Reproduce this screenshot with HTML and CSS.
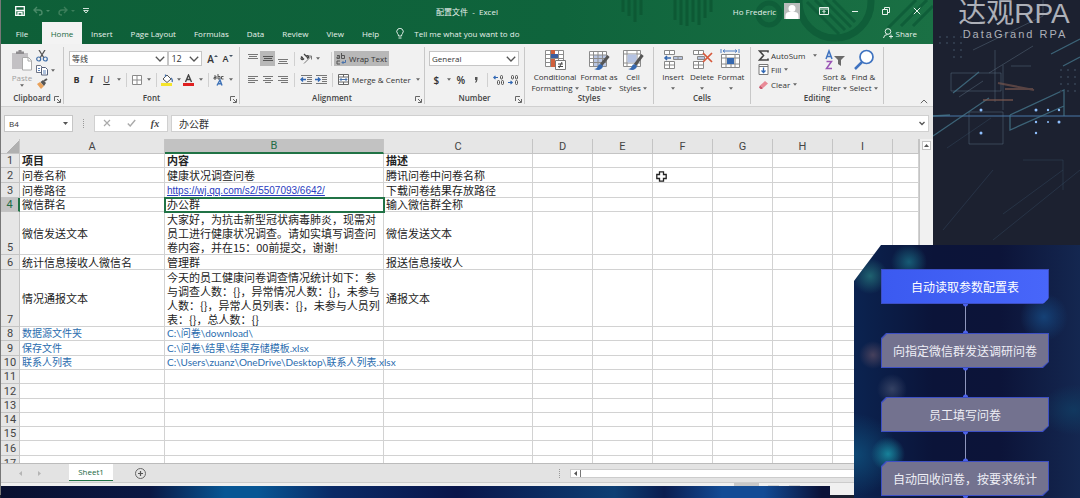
FILE: index.html
```html
<!DOCTYPE html>
<html lang="zh-CN">
<head>
<meta charset="utf-8">
<title>配置文件 - Excel</title>
<link rel="stylesheet" href="styles.css">
</head>
<body>
<svg class="defs" aria-hidden="true">
  <symbol id="caret" viewBox="0 0 5 3"><path d="M0 0h5L2.500 3z" fill="#666"/></symbol>
  <symbol id="chev" viewBox="0 0 10 6"><path d="M.8.8 5 5 9.200.8" fill="none" stroke="#555" stroke-width="1.300"/></symbol>
  <symbol id="launch" viewBox="0 0 7 7"><path d="M.5 5V.5H5M3 3l3 3M6.500 3v3.500H3" fill="none" stroke="#666"/></symbol>
</svg>
<div class="stage">
<main class="app">
  <header class="top">
    <svg class="deco" viewBox="0 0 320 44" aria-hidden="true">
      <g stroke="#0d5934" stroke-width="3"><path d="M10 0v12M16 0v16M22 0v22M28 0v15M62 0v20M68 0v25M74 0v26M80 0v22M86 0v25M92 0v18M98 0v12"/></g>
      <g fill="none" stroke="#0f5e39"><circle cx="156" cy="14" r="11" stroke-width="5"/><circle cx="222" cy="2" r="36" stroke-width="7"/><path stroke-width="3" d="M194 2l32 32M202 0l30 30M211 0l27 27M220 0l22 22M275 28 303 0M288 26 314 0M300 26l20-20"/></g>
    </svg>
    <div class="titlebar">
      <div class="quick">
        <button aria-label="Save"><svg width="10" height="10" viewBox="0 0 10 10"><path d="M.7.700h8.600v8.600H.7z" fill="none" stroke="#fff" stroke-width="1.300"/><path d="M1 4.500h8M3 9V6.500h4V9" fill="none" stroke="#fff" stroke-width="1.300"/></svg></button>
        <button aria-label="Undo"><svg width="17" height="10" viewBox="0 0 17 10"><path d="M4 1 1 4l3 3M1 4h5q3 0 3 3 0 2-3 2" fill="none" stroke="#4a8a68" stroke-width="1.400"/><path d="M13 4h4l-2 2z" fill="#4a8a68"/></svg></button>
        <button aria-label="Redo"><svg width="17" height="10" viewBox="0 0 17 10"><path d="M6 1l3 3-3 3M9 4H4Q1 4 1 7q0 2 3 2" fill="none" stroke="#3c7f5b" stroke-width="1.400"/><path d="M13 4h4l-2 2z" fill="#3c7f5b"/></svg></button>
        <button aria-label="Customize"><svg width="6" height="6" viewBox="0 0 6 6"><path d="M0 .5h6M.7 2.500h4.600L3 5z" fill="none" stroke="#cfe2d8"/></svg></button>
      </div>
      <div class="doc">配置文件&nbsp; - &nbsp;Excel</div>
      <div class="user"><span>Ho Frederic</span>
        <svg width="16" height="16" viewBox="0 0 16 16"><path d="M0 0h16v16H0z" fill="#b9bcbb"/><circle cx="8" cy="5.500" r="3.500" fill="#fff"/><path d="M1.500 16v-3q0-4 4-4h5q4 0 4 4v3z" fill="#fff"/></svg></div>
      <div class="winbtns">
        <button aria-label="Ribbon options"><svg width="10" height="8" viewBox="0 0 10 8"><path d="M.5.500h9v7h-9zM.5 2h9M5 6.500v-3M3.500 5 5 3.500 6.500 5" fill="none" stroke="#e8f2ec"/></svg></button>
        <button aria-label="Minimize"><svg width="8" height="8" viewBox="0 0 8 8"><path d="M1 4.500h6" stroke="#e8f2ec"/></svg></button>
        <button aria-label="Restore"><svg width="8" height="8" viewBox="0 0 8 8"><path d="M.5 2.500h5v5h-5zM2.500 2V.5h5v5H6" fill="none" stroke="#e8f2ec"/></svg></button>
        <button aria-label="Close"><svg width="8" height="8" viewBox="0 0 8 8"><path d="M.8.800l6.400 6.400M7.200.800.8 7.200" stroke="#e8f2ec"/></svg></button>
      </div>
    </div>
    <nav class="tabs">
      <button>File</button><button class="on">Home</button><button>Insert</button><button>Page Layout</button><button>Formulas</button><button>Data</button><button>Review</button><button>View</button><button>Help</button>
      <button class="tell"><svg width="8" height="11" viewBox="0 0 8 11"><path d="M2.500 8Q2.500 6.500 1.500 5.500A3.200 3.200 0 1 1 6.500 5.500Q5.500 6.500 5.500 8zM2.500 10h3" fill="none" stroke="#e3efe8"/></svg>Tell me what you want to do</button>
      <button class="share"><svg width="10" height="11" viewBox="0 0 10 11"><circle cx="5" cy="3.500" r="2.800" fill="none" stroke="#e3efe8"/><path d="M.5 10Q1 6.500 4.500 6.500M8 6.500v4M6 8.500h4" fill="none" stroke="#e3efe8"/></svg>Share</button>
    </nav>
  </header>

  <section class="ribbon">
    <div class="group g-clip">
      <div class="body">
        <button class="big off"><svg width="22" height="22" viewBox="0 0 22 22"><path d="M1 4h16v16H1z" fill="#c3c1c4"/><path d="M5 4V2.500h2.500V1h3v1.500H13V5H5z" fill="#8e8c8f"/><path d="M11.500 8.500h6l3 3v9.500h-9z" fill="#fff" stroke="#aaa"/><path d="M17 8.500v3.500h3.500" fill="none" stroke="#aaa"/></svg>Paste<svg class="caret"><use href="#caret"/></svg></button>
        <div class="stack">
          <button aria-label="Cut"><svg width="12" height="12" viewBox="0 0 12 12"><path d="M3 0l5 8M9 0 4 8" stroke="#555" stroke-width="1.300"/><circle cx="2.700" cy="9" r="2" fill="none" stroke="#3f6ea8" stroke-width="1.200"/><circle cx="9.300" cy="9" r="2" fill="none" stroke="#3f6ea8" stroke-width="1.200"/></svg></button>
          <button aria-label="Copy"><svg width="12" height="12" viewBox="0 0 12 12"><path d="M.5 1.500h4l2 2v5h-6z" fill="#fff" stroke="#6e7485"/><path d="M5.500 3.500h4l2 2v5.500h-6z" fill="#fff" stroke="#55607a"/><path d="M2 4.500h2M2 6.500h2M7 7h3M7 9h3" stroke="#5c83bb"/></svg><svg class="caret"><use href="#caret"/></svg></button>
          <button aria-label="Format Painter"><svg width="12" height="12" viewBox="0 0 12 12"><path d="M1 6l3-2 4 4-3 3z" fill="#e9a25b"/><path d="M4.500 4 7 2l3 3-2 3z" fill="#555"/><path d="M8 3l3-2" stroke="#555" stroke-width="2"/></svg></button>
        </div>
      </div>
      <h2>Clipboard</h2><svg class="launch"><use href="#launch"/></svg>
    </div>

    <div class="group g-font">
      <div class="body rows">
        <div class="row">
          <label class="combo c-name"><select aria-label="Font name"><option>等线</option></select><svg><use href="#chev"/></svg></label>
          <label class="combo c-size"><select aria-label="Font size"><option>12</option></select><svg><use href="#chev"/></svg></label>
          <button class="ic" aria-label="Grow font"><span class="glyph">A</span><svg width="4" height="8" viewBox="0 0 4 8"><path d="M0 2h4L2 0z" fill="#456"/></svg></button>
          <button class="ic" aria-label="Shrink font"><span class="glyph sm">A</span><svg width="4" height="8" viewBox="0 0 4 8"><path d="M0 0h4L2 2z" fill="#456"/></svg></button>
        </div>
        <div class="row">
          <button class="ic"><b>B</b></button><button class="ic it"><i>I</i></button><button class="ic"><u>U</u></button><svg class="caret"><use href="#caret"/></svg>
          <hr>
          <button class="ic" aria-label="Borders"><svg width="10" height="10" viewBox="0 0 10 10"><path d="M.5.500h9v9h-9zM5 1v8M1 5h8" fill="#fff" stroke="#8a8a8a"/></svg></button><svg class="caret"><use href="#caret"/></svg>
          <hr>
          <button class="ic" aria-label="Fill color"><svg width="12" height="12" viewBox="0 0 12 12"><path d="M0 9h11v3H0z" fill="#f5e42b"/><path d="M2 5l4-4 4 4-4 3.500z" fill="#fff" stroke="#555"/><path d="M4.500 3V.5M10 4q2 2 1 4" stroke="#4872ab" fill="none" stroke-width="1.300"/></svg></button><svg class="caret"><use href="#caret"/></svg>
          <button class="ic" aria-label="Font color"><svg width="12" height="12" viewBox="0 0 12 12"><path d="M0 9h11v3H0z" fill="#e02020"/><path d="M2.500 8 5.500 1l3 7M3.700 5.500h3.600" fill="none" stroke="#444" stroke-width="1.400"/></svg></button><svg class="caret"><use href="#caret"/></svg>
          <hr>
          <button class="ic" aria-label="Phonetic"><svg width="11" height="12" viewBox="0 0 11 12"><path d="M1 2h2v3H1V3.500h2M5 0v5h2V2.500H5M10.500 2.500h-2V5h2" fill="none" stroke="#555"/><path d="M4 11.500 7 6l2 5.500M5 9.800h4" fill="none" stroke="#3f73b8" stroke-width="1.400"/></svg></button><svg class="caret"><use href="#caret"/></svg>
        </div>
      </div>
      <h2>Font</h2><svg class="launch"><use href="#launch"/></svg>
    </div>

    <div class="group g-align">
      <div class="body rows">
        <div class="row">
          <button class="ic" aria-label="Top align"><svg width="10" height="12" viewBox="0 0 10 12"><path d="M0 1.500h10M1 3.500h8M0 5.500h10" stroke="#777"/></svg></button>
          <button class="ic on" aria-label="Middle align"><svg width="10" height="12" viewBox="0 0 10 12"><path d="M0 3.500h10M1 5.500h8M0 7.500h10" stroke="#555"/></svg></button>
          <button class="ic" aria-label="Bottom align"><svg width="10" height="12" viewBox="0 0 10 12"><path d="M0 6.500h10M1 8.500h8M0 10.500h10" stroke="#777"/></svg></button>
          <hr>
          <button class="ic" aria-label="Orientation"><svg width="12" height="11" viewBox="0 0 12 11"><path d="M4 10.500 11 3.500M8 3h3.500v3.500" fill="none" stroke="#777"/><path d="M1 3.500l3 3M1 6q0-2 2-1.500M1 6q1.500 1.500 3-.5M4 1l4 4M6 3q2-1 2.500.5T7 5.500" fill="none" stroke="#444" stroke-width="1.200"/></svg></button><svg class="caret"><use href="#caret"/></svg>
          <hr class="wide-gap">
          <button class="txt on"><svg width="10" height="12" viewBox="0 0 10 12"><path d="M1 2.500h2.500v3H1V4h2.500M5.500 0v5.500H8.500v-3H5.500M4 8H1v3h3" fill="none" stroke="#555"/><path d="M9.500 7v2.500H6M7.500 8 6 9.500 7.500 11" fill="none" stroke="#4872ab"/></svg>Wrap Text</button>
        </div>
        <div class="row">
          <button class="ic" aria-label="Align left"><svg width="10" height="9" viewBox="0 0 10 9"><path d="M0 1.500h10M0 3.500h7M0 5.500h10M0 7.500h7" stroke="#777"/></svg></button>
          <button class="ic" aria-label="Center"><svg width="10" height="9" viewBox="0 0 10 9"><path d="M0 1.500h10M2 3.500h6M0 5.500h10M2 7.500h6" stroke="#777"/></svg></button>
          <button class="ic" aria-label="Align right"><svg width="10" height="9" viewBox="0 0 10 9"><path d="M0 1.500h10M3 3.500h7M0 5.500h10M3 7.500h7" stroke="#777"/></svg></button>
          <hr>
          <button class="ic" aria-label="Decrease indent"><svg width="12" height="10" viewBox="0 0 12 10"><path d="M1 .5h11M7 2.500h5M7 4.500h5M7 6.500h5M1 8.500h11" stroke="#777"/><path d="M6 4.500H1M3 2.500l-2 2 2 2" fill="none" stroke="#2f66b3" stroke-width="1.400"/></svg></button>
          <button class="ic" aria-label="Increase indent"><svg width="12" height="10" viewBox="0 0 12 10"><path d="M1 .5h11M7 2.500h5M7 4.500h5M7 6.500h5M1 8.500h11" stroke="#777"/><path d="M0 4.500h5M3 2.500l2 2-2 2" fill="none" stroke="#2f66b3" stroke-width="1.400"/></svg></button>
          <hr>
          <button class="txt"><svg width="11" height="11" viewBox="0 0 11 11"><path d="M.5.500h10v10H.5zM.5 3h10M.5 8h10M5.500.500V3M5.500 8v2.500" fill="#fff" stroke="#666"/><path d="M2 5.500h7M3.500 4 2 5.500 3.500 7M7.500 4 9 5.500 7.500 7" fill="none" stroke="#4872ab"/></svg>Merge &amp; Center</button><svg class="caret"><use href="#caret"/></svg>
        </div>
      </div>
      <h2>Alignment</h2><svg class="launch"><use href="#launch"/></svg>
    </div>

    <div class="group g-num">
      <div class="body rows">
        <div class="row"><label class="combo c-fmt"><select aria-label="Number format"><option>General</option></select><svg><use href="#chev"/></svg></label></div>
        <div class="row">
          <button class="ic"><span class="glyph">$</span></button><svg class="caret"><use href="#caret"/></svg>
          <button class="ic pct"><span class="glyph">%</span></button>
          <button class="ic" aria-label="Comma style"><svg width="4" height="6" viewBox="0 0 4 6"><path d="M1 0h2.500v2.500Q3.500 5 1 6L2 3H1z" fill="#555"/></svg></button>
          <hr>
          <button class="ic" aria-label="Increase decimal"><svg width="11" height="10" viewBox="0 0 11 10"><path d="M5 2.500H1M2.500.800.8 2.500l1.700 1.700" fill="none" stroke="#2f66b3" stroke-width="1.200"/><g fill="none" stroke="#555"><rect x="7.500" y=".5" width="2" height="3.500" rx="1"/><rect x="4.500" y="5.500" width="2" height="4" rx="1"/><rect x="8.500" y="5.500" width="2" height="4" rx="1"/></g></svg></button>
          <button class="ic" aria-label="Decrease decimal"><svg width="11" height="10" viewBox="0 0 11 10"><path d="M1 7.500h4M3.500 5.800l1.700 1.700-1.700 1.700" fill="none" stroke="#2f66b3" stroke-width="1.200"/><g fill="none" stroke="#555"><rect x="4.500" y=".5" width="2" height="3.500" rx="1"/><rect x="8.500" y=".5" width="2" height="3.500" rx="1"/><rect x="8.500" y="5.500" width="2" height="4" rx="1"/></g></svg></button>
        </div>
      </div>
      <h2>Number</h2><svg class="launch"><use href="#launch"/></svg>
    </div>

    <div class="group g-style">
      <div class="body bigs">
        <button class="big w1"><svg width="22" height="22" viewBox="0 0 22 22"><path d="M1.500 1.500h18v16h-18zM1.500 5.500h18M1.500 9.500h18M1.500 13.500h18M6.500 1.500v16M14.500 1.500v16" fill="#fff" stroke="#8b8b8b"/><path d="M7 1h4v4H7zM7 10h4v8H7z" fill="#d0603c"/><path d="M7 5h7v4H7z" fill="#3c5fa0"/><path d="M11.500 11.500h10v9h-10z" fill="#fff" stroke="#777"/><path d="M14 15h5M14 17.500h5M18 13l-3 6" stroke="#444"/></svg><span>Conditional<br>Formatting <svg class="caret"><use href="#caret"/></svg></span></button>
        <button class="big w2"><svg width="22" height="22" viewBox="0 0 22 22"><path d="M1.500 2.500h17v15h-17z" fill="#fff" stroke="#8b8b8b"/><path d="M6 6h12v11H6z" fill="#b9c6e2"/><path d="M1.500 6h17M1.500 9.500h17M1.500 13.500h17M5.500 2.500v15M10 2.500v15M14.500 2.500v15" stroke="#8b8b8b"/><path d="M20.500 7 13 16" stroke="#555" stroke-width="3"/><path d="M6 20q3 0 4-3t4-1q2 2-1 4-2 2-7 0z" fill="#3568b0"/></svg><span>Format as<br>Table <svg class="caret"><use href="#caret"/></svg></span></button>
        <button class="big w3"><svg width="22" height="22" viewBox="0 0 22 22"><path d="M1.500 1.500h17v16h-17zM1.500 5h17M1.500 14h17M5 1.500v16M15 1.500v16" fill="#fff" stroke="#8b8b8b"/><path d="M5.500 5.500h9v8h-9z" fill="#b4c2e2"/><path d="M20.500 6 13 16" stroke="#555" stroke-width="3"/><path d="M6 20q3 0 4-3t4-1q2 2-1 4-2 2-7 0z" fill="#3568b0"/></svg><span>Cell<br>Styles <svg class="caret"><use href="#caret"/></svg></span></button>
      </div>
      <h2>Styles</h2>
    </div>

    <div class="group g-cells">
      <div class="body bigs">
        <button class="big w4"><svg width="22" height="22" viewBox="0 0 22 22"><path d="M2.500 1.500h10v4h-10zM7.500 1.500v4M2.500 12.500h10v7h-10zM7.500 12.500v7M2.500 16h10" fill="#fff" stroke="#888"/><path d="M11.500 7.500h9v3h-9zM16 7.500v3" fill="#b7c3dc" stroke="#888"/><path d="M9 9H3M5 7 3 9l2 2" fill="none" stroke="#3568b0" stroke-width="1.500"/></svg><span>Insert<br><svg class="caret"><use href="#caret"/></svg></span></button>
        <button class="big w4"><svg width="22" height="22" viewBox="0 0 22 22"><path d="M2.500 1.500h10v4h-10zM7.500 1.500v4M2.500 12.500h10v7h-10zM7.500 12.500v7M2.500 16h10" fill="#fff" stroke="#888"/><path d="M6.500 7.500h7v3h-7z" fill="#b7c3dc" stroke="#888"/><path d="M12 4l9 9M21 4l-9 9" stroke="#d6573a" stroke-width="1.700"/></svg><span>Delete<br><svg class="caret"><use href="#caret"/></svg></span></button>
        <button class="big w4"><svg width="22" height="22" viewBox="0 0 22 22"><path d="M1.500 5.500h18v13h-18zM1.500 9h18M1.500 15h18M6 5.500v13M11 15v4M15 5.500v13" fill="#fff" stroke="#888"/><path d="M7 9h7v6H7z" fill="#3568b0"/><path d="M3 2h14M5 .5 3 2l2 1.500M15 .5 17 2l-2 1.500M1 0v4M19 0v4" fill="none" stroke="#4f7fc4"/></svg><span>Format<br><svg class="caret"><use href="#caret"/></svg></span></button>
      </div>
      <h2>Cells</h2>
    </div>

    <div class="group g-edit">
      <div class="body">
        <div class="stack wide">
          <button><svg width="11" height="11" viewBox="0 0 11 11"><path d="M10 2.500V1H1.500l4 4.500-4 4.500H10V8.500" fill="none" stroke="#444" stroke-width="1.600"/></svg>AutoSum<svg class="caret far"><use href="#caret"/></svg></button>
          <button><svg width="11" height="11" viewBox="0 0 11 11"><path d="M1 .5h9v10H1zM1 2.500h9" fill="#fff" stroke="#777"/><path d="M5.500 3.500v5M3.500 6.500l2 2 2-2" fill="none" stroke="#2f66b3" stroke-width="1.300"/></svg>Fill<svg class="caret"><use href="#caret"/></svg></button>
          <button><svg width="11" height="11" viewBox="0 0 11 11"><path d="M2 6.500 7 2l3 2.500-5 4.500z" fill="#e98a97"/><path d="M2 6.500 5 9l-1 1H2.500L1 8.500z" fill="#c9566b"/></svg>Clear<svg class="caret"><use href="#caret"/></svg></button>
        </div>
        <button class="big w4"><svg width="22" height="22" viewBox="0 0 22 22"><path d="M2 10 5 2l3 8M3 7.500h4" fill="none" stroke="#3f73c0" stroke-width="1.500"/><path d="M2.500 12.500h5l-5 7h5.500" fill="none" stroke="#9a55b5" stroke-width="1.500"/><path d="M10 7h11l-4 4v6l-3-2v-4z" fill="#6a6a6a"/></svg><span>Sort &amp;<br>Filter <svg class="caret"><use href="#caret"/></svg></span></button>
        <button class="big w4"><svg width="22" height="22" viewBox="0 0 22 22"><circle cx="13.500" cy="8" r="6.500" fill="#fff" stroke="#3f73c0" stroke-width="1.700"/><path d="M9 13l-7 7" stroke="#3f73c0" stroke-width="2.500"/></svg><span>Find &amp;<br>Select <svg class="caret"><use href="#caret"/></svg></span></button>
      </div>
      <h2>Editing</h2>
    </div>
    <button class="fold" aria-label="Collapse ribbon"><svg width="8" height="5" viewBox="0 0 8 5"><path d="M.8 4.200 4 1l3.200 3.200" fill="none" stroke="#666"/></svg></button>
  </section>

  <section class="fbar">
    <label class="combo c-ref"><input aria-label="Name box" value="B4"><svg class="tri" viewBox="0 0 5 3"><path d="M0 0h5L2.500 3z" fill="#555"/></svg></label>
    <span class="grip"></span>
    <div class="fx">
      <button aria-label="Cancel"><svg width="8" height="8" viewBox="0 0 8 8"><path d="M1 1l6 6M7 1 1 7" stroke="#aaa" stroke-width="1.200"/></svg></button>
      <button aria-label="Enter"><svg width="9" height="8" viewBox="0 0 9 8"><path d="M.8 4.500 3.200 7 8.200 1" fill="none" stroke="#aaa" stroke-width="1.400"/></svg></button>
      <button class="fn">fx</button>
    </div>
    <label class="formula"><input aria-label="Formula" value="办公群"><svg width="6" height="5" viewBox="0 0 6 5"><path d="M.5 1 3 3.500 5.500 1" fill="none" stroke="#555" stroke-width="1.300"/></svg></label>
  </section>

  <section class="sheet">
    <div class="grid">
    <table>
      <colgroup><col class="k0"><col class="ka"><col class="kb"><col class="kc"><col class="kd"><col class="kd"><col class="kd"><col class="kd"><col class="kd"><col class="kd"><col></colgroup>
      <thead><tr><th class="corner"><th>A<th class="sel">B<th>C<th>D<th>E<th>F<th>G<th>H<th>I<th></thead>
      <tbody>
      <tr class="s bold"><th>1<td>项目<td>内容<td>描述<td><td><td><td><td><td><td>
      <tr><th>2<td>问卷名称<td>健康状况调查问卷<td>腾讯问卷中问卷名称<td><td><td><td><td><td><td>
      <tr class="s"><th>3<td>问卷路径<td><a href="https://wj.qq.com/s2/5507093/6642/">https://wj.qq.com/s2/5507093/6642/</a><td>下载问卷结果存放路径<td><td><td><td><td><td><td>
      <tr class="s"><th class="sel">4<td>微信群名<td class="cur">办公群<td>输入微信群全称<td><td><td><td><td><td><td>
      <tr class="l3"><th>5<td>微信发送文本<td>大家好，为抗击新型冠状病毒肺炎，现需对<br>员工进行健康状况调查。请如实填写调查问<br>卷内容，并在15：00前提交，谢谢!<td>微信发送文本<td><td><td><td><td><td><td>
      <tr><th>6<td>统计信息接收人微信名<td>管理群<td>报送信息接收人<td><td><td><td><td><td><td>
      <tr class="l4"><th>7<td>情况通报文本<td>今天的员工健康问卷调查情况统计如下：参<br>与调查人数：{}，异常情况人数：{}，未参与<br>人数：{}，异常人员列表：{}，未参与人员列<br>表：{}，总人数：{}<td>通报文本<td><td><td><td><td><td><td>
      <tr class="s blue"><th>8<td>数据源文件夹<td>C:\问卷\download\<td><td><td><td><td><td><td><td>
      <tr class="blue"><th>9<td>保存文件<td>C:\问卷\结果\结果存储模板.xlsx<td><td><td><td><td><td><td><td>
      <tr class="s blue"><th>10<td>联系人列表<td class="spill">C:\Users\zuanz\OneDrive\Desktop\联系人列表.xlsx<td><td><td><td><td><td><td><td>
      <tr class="s"><th>11<td><td><td><td><td><td><td><td><td><td>
      <tr><th>12<td><td><td><td><td><td><td><td><td><td>
      <tr class="s"><th>13<td><td><td><td><td><td><td><td><td><td>
      <tr class="s"><th>14<td><td><td><td><td><td><td><td><td><td>
      <tr class="s"><th>15<td><td><td><td><td><td><td><td><td><td>
      <tr><th>16<td><td><td><td><td><td><td><td><td><td>
      <tr><th>17<td><td><td><td><td><td><td><td><td><td>
      </tbody>
    </table>
    </div>
    <div class="vbar"><button aria-label="Scroll up"><svg width="5" height="3" viewBox="0 0 5 3"><path d="M0 3h5L2.500 0z" fill="#555"/></svg></button></div>
  </section>

  <footer class="sheetbar">
    <button class="nav" aria-label="Previous sheet"><svg width="3" height="5" viewBox="0 0 3 5"><path d="M3 0v5L0 2.500z" fill="#b5b5b5"/></svg></button>
    <button class="nav" aria-label="Next sheet"><svg width="3" height="5" viewBox="0 0 3 5"><path d="M0 0v5l3-2.500z" fill="#b5b5b5"/></svg></button>
    <button class="tab">Sheet1</button>
    <button class="plus" aria-label="New sheet"><svg width="11" height="11" viewBox="0 0 11 11"><circle cx="5.500" cy="5.500" r="5" fill="none" stroke="#666"/><path d="M5.500 3v5M3 5.500h5" stroke="#555" stroke-width="1.200"/></svg></button>
    <span class="grip"></span>
    <div class="hbar"><button aria-label="Scroll left"><svg width="3" height="5" viewBox="0 0 3 5"><path d="M3 0v5L0 2.500z" fill="#555"/></svg></button></div>
  </footer>
  <div class="status"><span class="view"></span><span class="view alt"></span><span class="view alt"></span></div>
  <svg class="pointer" width="11" height="11" viewBox="0 0 11 11" aria-hidden="true"><path d="M3.500.800h4v2.700h2.700v4H7.500v2.700h-4V7.500H.8v-4h2.700z" fill="#fff" stroke="#222" stroke-width="1.300"/></svg>
</main>

<aside class="side">
  <svg class="lines" viewBox="0 0 147 250" preserveAspectRatio="xMinYMin slice" aria-hidden="true">
    <g fill="none" stroke="#5f7386" opacity=".45"><path d="M18 73h50v18H18zM26 97l24-16M56 73 100 46M40 50l70-34v-16M36 112h34v32H36zM62 50v52M70 65v45M78 66h20"/></g>
    <path d="M0 116h147" stroke="#4878a8"/>
    <g fill="none" stroke="#47798f" stroke-width="1.300"><path d="M118 54l29-15M130 66l17-9M77 115l54-25v26M77 115v15l54-24M0 136 56 98M0 116l17-1M20 93l26-21" opacity=".75"/></g>
    <path d="M65 83l36 7M72 89h28M50 100h30" stroke="#805b50" stroke-width="2" opacity=".6"/>
    <path d="M14 148 58 118M60 240 147 170M70 214l60-44M10 230l50-60M90 160h40v30" fill="none" stroke="#3b5670" opacity=".35"/>
    <g fill="#8fc0ff"><circle cx="48" cy="110" r="1.500"/><circle cx="48" cy="133" r="1.500"/><circle cx="103" cy="110" r="1.500"/><circle cx="103" cy="122" r="1.200"/><circle cx="103" cy="133" r="1.200"/><circle cx="115" cy="110" r="1.200"/><circle cx="126" cy="110" r="1.200"/><circle cx="126" cy="122" r="1.500"/><circle cx="115" cy="122" r="1"/></g>
    <g fill="none" stroke="#2f3a4b" stroke-width="2" stroke-dasharray="2 5"><path d="M6 37h28M6 43h28M20 50h10M20 57h10M127 70h20M127 77h20M127 84h20M127 91h20"/></g>
  </svg>
  <div class="brand">达观RPA</div>
  <div class="sub">DataGrand RPA</div>
</aside>

<div class="strip"></div>
<section class="flow">
  <div class="step first">自动读取参数配置表</div>
  <i class="link"></i>
  <div class="step">向指定微信群发送调研问卷</div>
  <i class="link"></i>
  <div class="step">员工填写问卷</div>
  <i class="link"></i>
  <div class="step">自动回收问卷，按要求统计</div>
  <i class="link"></i>
</section>
</div>
</body>
</html>
```
FILE: styles.css
```css
* { box-sizing: border-box; }
body { margin: 0; background: #1b2030; font-family: "Open Sans", "Noto Sans CJK SC", sans-serif; font-size: 8px; color: #444; }
button { display: flex; align-items: center; justify-content: center; padding: 0; border: 0; background: none; color: inherit; font: inherit; white-space: nowrap; }
select, input { appearance: none; border: 0; padding: 0; margin: 0; background: none; font: inherit; color: #333; width: 100%; height: 100%; border-radius: 0; }
svg { display: block; flex: none; }
.defs { position: absolute; width: 0; height: 0; }
.stage { position: relative; display: grid; grid-template-columns: 1fr 147px; height: 100vh; overflow: hidden; }
.app { position: relative; display: flex; flex-direction: column; min-width: 0; min-height: 0; margin-bottom: 3px; background: #e6e6e6; border-left: 1px solid #777; overflow: hidden; }

/* title bar and tabs */
.top { position: relative; background: linear-gradient(90deg, #0e5f38, #0f643c 60%, #1a7044); color: #e6f1eb; height: 44px; flex: none; display: flex; flex-direction: column; }
.deco { position: absolute; right: 0; top: 0; width: 320px; height: 44px; }
.titlebar { position: relative; display: flex; align-items: center; height: 22px; flex: none; }
.quick { display: flex; align-items: center; gap: 8px; padding-left: 14px; }
.doc { position: absolute; left: 0; right: 0; text-align: center; }
.user { margin-left: auto; display: flex; align-items: center; gap: 8px; }
.winbtns { display: flex; align-items: center; padding: 0 1px 0 8px; }
.winbtns button { width: 31px; height: 20px; }
.tabs { position: relative; display: flex; flex: 1; padding-left: 1px; }
.tabs button { padding: 0 9px; }
.tabs button:first-child { width: 40px; }
.tabs .on { width: 40px; padding: 0; background: #f3f3f3; color: #17683f; }
.tabs .tell { gap: 10px; padding-left: 8px; }
.tabs .share { margin-left: auto; gap: 3px; padding-right: 16px; }

/* ribbon */
.ribbon { display: flex; flex: none; height: 63px; background: #f1f1f1; border-bottom: 1px solid #d0d0d0; color: #333; }
.group { position: relative; display: flex; flex-direction: column; flex: none; border-right: 1px solid #c8c8c8; margin: 3px 0; height: 57px; }
.group h2 { margin: 0; font-size: 8px; line-height: 12px; font-weight: 600; text-align: center; color: #444; }
.launch { position: absolute; right: 2px; bottom: 1px; width: 7px; height: 7px; }
.body { display: flex; flex: 1; min-height: 0; padding-top: 2px; }
.rows { flex-direction: column; gap: 6px; padding: 4px 4px 0; }
.row { display: flex; align-items: center; height: 15px; }
.row hr { width: 1px; height: 14px; border: 0; margin: 0 3px 0 4px; background: #d0d0d0; }
.row .wide-gap { margin: 0 2px 0 11px; }
.ic { width: 15px; height: 15px; font-size: 9px; }
.it { font-family: "Liberation Serif", serif; font-size: 10px; font-weight: 700; }
.pct { margin-left: 3px; }
.on { background: #b8b8b8; }
.txt { height: 15px; padding: 0 2px; gap: 3px; }
.glyph { font-size: 10px; font-weight: 600; }
.sm { font-size: 9px; }
.caret { width: 4px; height: 3px; margin-left: 3px; }
.big { flex-direction: column; justify-content: flex-start; line-height: 11px; text-align: center; }
.big .caret { display: inline-block; vertical-align: 1px; margin: 0; }
.off { color: #a0a0a0; gap: 1px; }
.stack { display: flex; flex-direction: column; justify-content: space-between; padding-bottom: 1px; }
.stack button { height: 14px; justify-content: flex-start; }
.g-clip { width: 63px; }
.g-clip .body { padding-left: 10px; gap: 3px; }
.g-font { width: 176px; }
.g-font .rows { padding-left: 5px; }
.g-font .row hr { margin: 0 2px 0 5px; }
.g-align { width: 185px; }
.g-align .rows { padding-left: 5px; }
.g-num { width: 100px; }
.g-style { width: 129px; }
.g-cells { width: 97px; }
.g-edit { width: 133px; }
.bigs { justify-content: center; }
.w1 { width: 48px; }
.w2 { width: 40px; }
.w3 { width: 28px; }
.w4 { width: 29px; }
.g-edit .body { padding: 1px 0 0 7px; }
.g-edit .big { margin-top: 1px; }
.stack.wide { width: 62px; }
.wide button { gap: 2px; }
.wide .caret { margin-left: 1px; }
.wide .far { margin-left: 6px; }
.fold { margin: auto 5px 2px auto; }
.combo { position: relative; display: block; height: 15px; background: #fff; border: 1px solid #c6c6c6; padding: 0 2px; }
.combo svg { position: absolute; right: 2px; top: 4px; width: 10px; height: 6px; pointer-events: none; }
.c-name { width: 100px; }
.c-size { width: 34px; margin-right: 3px; }
.c-size select { font-size: 9px; }
.c-fmt { width: 90px; }

/* formula bar */
.fbar { display: flex; align-items: center; flex: none; height: 32px; padding: 0 4px 0 3px; }
.c-ref { width: 69px; height: 17px; padding-left: 4px; }
.combo .tri { width: 5px; height: 3px; right: 4px; top: 6px; }
.grip { width: 1px; height: 9px; margin: 0 10px; border-left: 1px dotted #999; }
.fx { display: flex; width: 74px; height: 17px; background: #fff; border: 1px solid #d0d0d0; }
.fx button { flex: 1; }
.fx .fn { font-family: "Liberation Serif", serif; font-style: italic; font-weight: 700; font-size: 10px; }
.formula { display: flex; align-items: center; flex: 1; height: 17px; margin-left: 3px; padding: 0 3px 0 7px; background: #fff; border: 1px solid #d0d0d0; }
.formula input { font-size: 10px; }

/* worksheet */
.sheet { display: flex; flex: 1; min-height: 0; }
.grid { flex: 1; min-width: 0; overflow: hidden; background: #fff; }
table { width: 100%; table-layout: fixed; border-collapse: separate; border-spacing: 0; font-family: "Noto Sans CJK SC", sans-serif; font-size: 11px; color: #222; }
.k0 { width: 19px; }
.ka { width: 145px; }
.kb { width: 219px; }
.kc { width: 149px; }
.kd { width: 60px; }
tr { height: 15px; }
tr.s { height: 14px; }
tr.l3 { height: 42px; }
tr.l4 { height: 57px; }
thead tr { height: 15px; }
th, td { padding: 0; border-right: 1px solid #d2d2d2; border-bottom: 1px solid #d2d2d2; white-space: nowrap; line-height: 13px; }
td { padding-left: 2px; text-align: left; vertical-align: middle; }
.l3 td, .l4 td { line-height: 14px; }
th { background: #e6e6e6; color: #444; font-family: Roboto, sans-serif; font-size: 11px; font-weight: 400; vertical-align: bottom; border-color: #c4c4c4; }
th.sel { background: #c2c2c2; color: #1f6b45; }
thead .sel { border-bottom: 2px solid #217346; }
tbody .sel { border-right: 2px solid #217346; }
.corner { background: linear-gradient(135deg, #e6e6e6 60%, #b0b0b0 60%); }
.bold td { font-weight: 700; }
.blue td { color: #2a6cae; font-family: Lato, "Noto Sans CJK SC", sans-serif; font-size: 10px; }
td.spill { position: relative; }
td.cur { outline: 2px solid #217346; outline-offset: -1px; }
td a { color: #2a3cc0; font-family: "Liberation Sans", sans-serif; font-size: 10px; }
.vbar { width: 14px; padding: 2px; background: #f1f1f1; border-left: 1px solid #c4c4c4; }
.vbar button { width: 9px; height: 9px; background: #fff; border: 1px solid #c4c4c4; }

/* sheet tabs and status */
.sheetbar { display: flex; align-items: center; flex: none; height: 19px; background: #e3e3e3; border-top: 1px solid #bbb; padding-left: 10px; }
.nav { width: 19px; }
.tab { width: 44px; height: 17px; margin: 0 22px 2px 20px; background: #fff; color: #17683f; border-bottom: 1px solid #217346; }
.sheetbar .grip { margin-left: auto; }
.hbar { width: 350px; height: 9px; margin-right: 13px; background: #fff; border: 1px solid #ccc; }
.hbar button { width: 10px; height: 7px; border-right: 1px solid #777; }
.status { display: flex; justify-content: flex-end; flex: none; height: 13px; padding-right: 132px; gap: 8px; background: #f0f0f0; border-top: 1px solid #ccc; }
.view { width: 25px; background: #c8c8c8; }
.alt { width: 11px; margin: 2px 1px; background: #d4d4d4; }
.pointer { position: absolute; left: 655px; top: 171px; }

/* backdrop and brand */
.side { position: relative; background: #1c2130; text-align: center; color: #adb0b8; font-family: "Liberation Sans", "Noto Sans CJK SC", sans-serif; }
.lines { position: absolute; left: 0; top: 0; width: 147px; height: 250px; }
.brand { position: relative; padding-left: 15px; font-size: 28px; line-height: 28px; height: 26px; }
.sub { position: relative; padding-left: 17px; font-size: 11px; line-height: 16px; letter-spacing: 2px; }
.strip { position: absolute; left: 1px; right: 250px; bottom: 0; height: 12px; background: linear-gradient(90deg, #09102f 0, #0a1844 18%, #075694 27%, #075694 31%, #0a2a66 40%, #09154a 55%, #0d3f74 74%, #0a1d50 80%, #124b95 87%, #124b95 92%, #0a1238 99%); }

/* process panel */
.flow { position: absolute; right: 0; top: 245px; bottom: 0; width: 226px; display: flex; flex-direction: column; padding: 24px 31px 0 27px; overflow: hidden; clip-path: polygon(27px 0, 100% 0, 100% 100%, 0 100%, 0 36px);
  background:
    radial-gradient(circle at 16px 31px, #1f6270 0, transparent 18px),
    radial-gradient(circle at 55px 17px, #175b75 0, transparent 18px),
    radial-gradient(circle at 19px 110px, #46405c 0, transparent 14px),
    radial-gradient(circle at 38px 144px, #344163 0, transparent 15px),
    radial-gradient(circle at 34px 209px, #17829a 0, transparent 17px),
    radial-gradient(circle at 190px 72px, #154176 0, transparent 24px),
    radial-gradient(ellipse at 0 210px, #0e4874 0, transparent 45px),
    radial-gradient(ellipse at 220px 165px, #11385f 0, transparent 34px),
    linear-gradient(90deg, #0b2350, #0b1439 35%, #0c1439 65%, #142750); }
.step { position: relative; z-index: 0; display: flex; align-items: center; justify-content: center; flex: none; height: 35px; background: #3d4fc4; color: #eeeef5; font-family: "Noto Sans CJK SC", sans-serif; font-size: 12px; clip-path: polygon(5px 0, 100% 0, 100% 29px, 162px 100%, 0 100%, 0 5px); }
.step::before { content: ""; position: absolute; z-index: -1; inset: 1px; background: #73728f; clip-path: polygon(5px 0, 100% 0, 100% 28px, 160px 100%, 0 100%, 0 5px); }
.first { color: #fff; clip-path: polygon(0 0, 100% 0, 100% 29px, 162px 100%, 0 100%); }
.first::before { background: linear-gradient(90deg, #3b5af0, #4866fa); clip-path: none; }
.link { flex: none; width: 5px; height: 29px; margin-left: 82px; background: radial-gradient(circle at 50% 0, #4c62ea 2px, transparent 3px), radial-gradient(circle at 50% 100%, #4c62ea 2px, transparent 3px), linear-gradient(90deg, transparent 2px, #8f97bd 2px, #8f97bd 3px, transparent 3px); }
```
